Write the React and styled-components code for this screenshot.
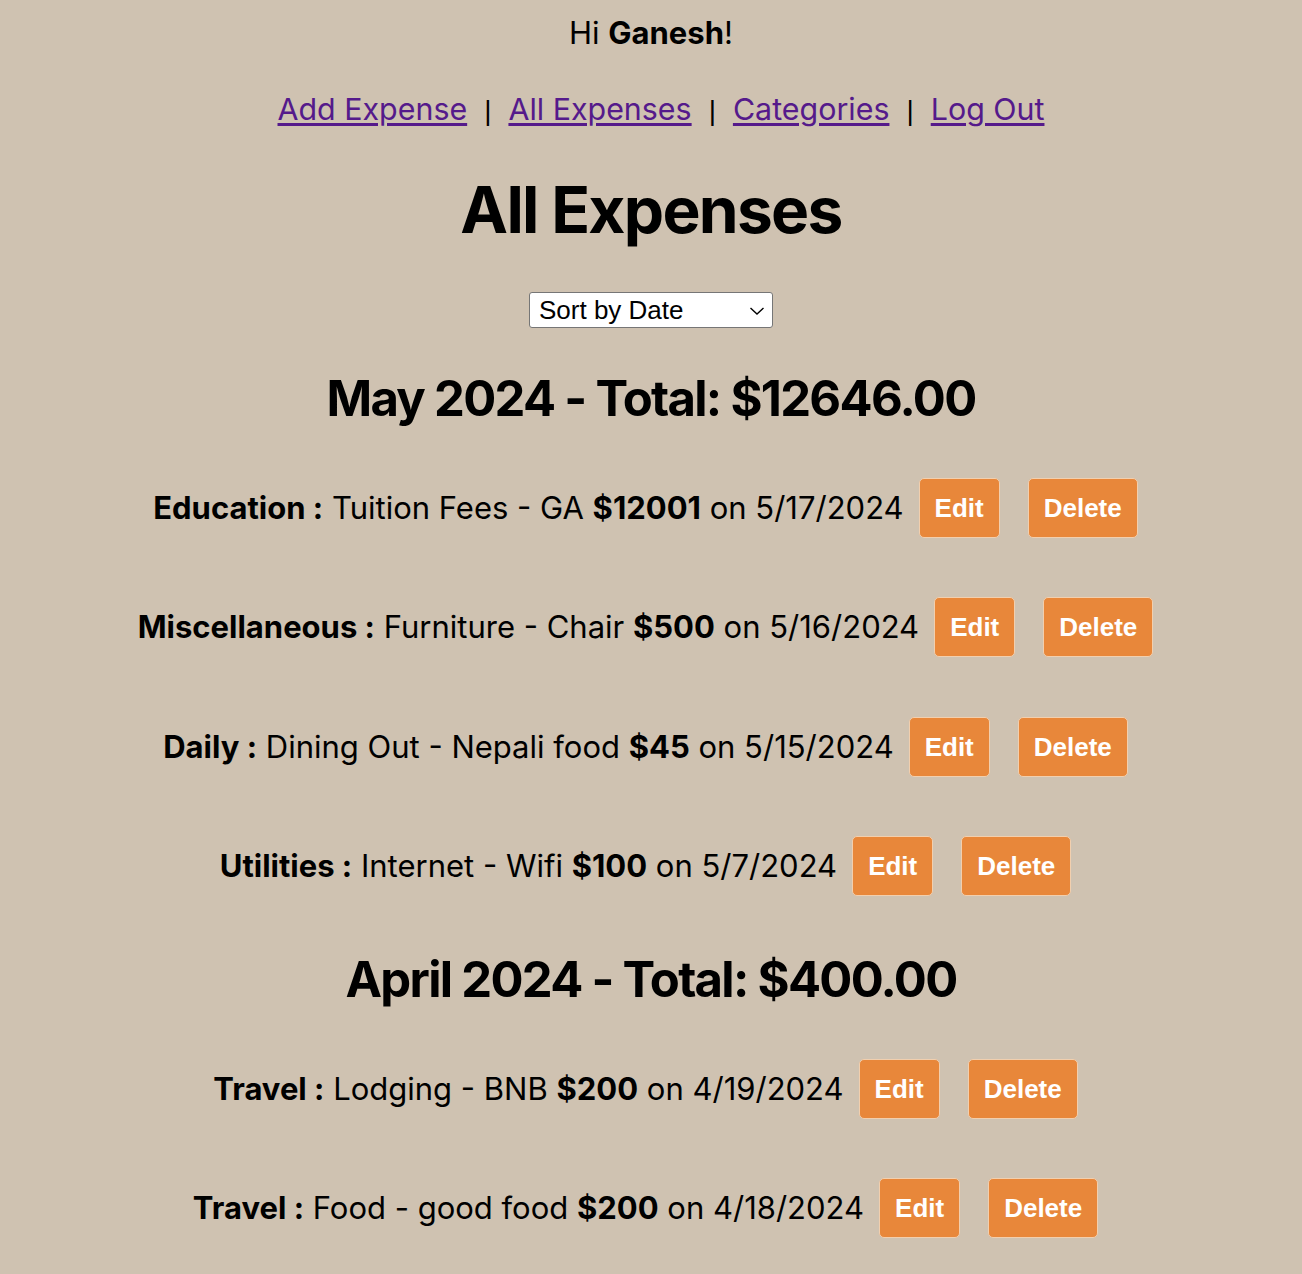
import React from "react";
import styled, { createGlobalStyle } from "styled-components";

const months = [
  {
    label: "May 2024",
    total: "$12646.00",
    items: [
      { category: "Education", name: "Tuition Fees - GA", amount: "$12001", date: "5/17/2024" },
      { category: "Miscellaneous", name: "Furniture - Chair", amount: "$500", date: "5/16/2024" },
      { category: "Daily", name: "Dining Out - Nepali food", amount: "$45", date: "5/15/2024" },
      { category: "Utilities", name: "Internet - Wifi", amount: "$100", date: "5/7/2024" },
    ],
  },
  {
    label: "April 2024",
    total: "$400.00",
    items: [
      { category: "Travel", name: "Lodging - BNB", amount: "$200", date: "4/19/2024" },
      { category: "Travel", name: "Food - good food", amount: "$200", date: "4/18/2024" },
    ],
  },
];

const links = ["Add Expense", "All Expenses", "Categories", "Log Out"];

const GlobalStyle = createGlobalStyle`
  body {
    margin: 0;
    background: #cfc2b1;
    font-family: Inter, "Liberation Sans", sans-serif;
    color: #000;
  }
`;

const App = () => {
  return (
    <Page>
      <GlobalStyle />
      <Greeting>
        Hi <b>Ganesh</b>!
      </Greeting>
      <Nav>
        {links.map((link, i) => (
          <React.Fragment key={link}>
            {i > 0 && <Sep>|</Sep>}
            <NavLink href="#">{link}</NavLink>
          </React.Fragment>
        ))}
      </Nav>
      <Title>All Expenses</Title>
      <SelectWrap>
        <SortSelect defaultValue="date">
          <option value="date">Sort by Date</option>
          <option value="amount">Sort by Amount</option>
          <option value="category">Sort by Category</option>
        </SortSelect>
        <Chevron viewBox="0 0 16 10" aria-hidden="true">
          <path d="M1.5 2 L8 8 L14.5 2" fill="none" stroke="#000" strokeWidth="1.4" />
        </Chevron>
      </SelectWrap>
      {months.map((month, mi) => (
        <MonthSection key={month.label} $first={mi === 0}>
          <MonthTitle>
            {month.label} - Total: {month.total}
          </MonthTitle>
          <List>
            {month.items.map((item) => (
              <Row key={item.name}>
                <RowText>
                  <b>{item.category} :</b> {item.name} <b>{item.amount}</b> on {item.date}
                </RowText>
                <ActionButton>Edit</ActionButton>
                <ActionButton>Delete</ActionButton>
              </Row>
            ))}
          </List>
        </MonthSection>
      ))}
    </Page>
  );
};

const Page = styled.div`
  display: flex;
  flex-direction: column;
  align-items: center;
  padding-top: 15px;
  padding-bottom: 40px;
`;

const Greeting = styled.p`
  margin: 0;
  font-size: 31px;
  line-height: 36px;
`;

const Nav = styled.nav`
  margin-top: 40px;
  padding-left: 20px;
  font-size: 30.4px;
  line-height: 36px;
`;

const NavLink = styled.a`
  color: #551a8b;
  text-decoration: underline;
  text-underline-offset: 3px;
`;

const Sep = styled.span`
  margin: 0 17px;
  font-size: 28px;
  font-family: "Liberation Sans", Arial, sans-serif;
`;

const Title = styled.h1`
  margin: 42px 0 0;
  font-size: 64px;
  line-height: 78px;
  font-weight: 700;
  letter-spacing: -1.7px;
`;

const SelectWrap = styled.div`
  position: relative;
  margin-top: 43px;
  display: flex;
`;

const SortSelect = styled.select`
  appearance: none;
  width: 244px;
  height: 36px;
  font-family: "Liberation Sans", Arial, sans-serif;
  font-size: 26px;
  padding: 0 9px;
  border: 1px solid #767676;
  border-radius: 3px;
  background: #fff;
  color: #000;
`;

const Chevron = styled.svg`
  position: absolute;
  right: 8px;
  top: 14px;
  width: 16px;
  height: 10px;
  pointer-events: none;
`;

const MonthSection = styled.section`
  display: flex;
  flex-direction: column;
  align-items: center;
  margin-top: ${(p) => (p.$first ? "41px" : "54px")};
`;

const MonthTitle = styled.h2`
  margin: 0;
  font-size: 49px;
  line-height: 60px;
  font-weight: 700;
  letter-spacing: -1.7px;
`;

const List = styled.div`
  display: flex;
  flex-direction: column;
  align-items: center;
  gap: 59.3px;
  margin-top: 49px;
`;

const Row = styled.div`
  display: flex;
  align-items: center;
  gap: 15px;
  padding-right: 11px;
`;

const RowText = styled.span`
  font-size: 31px;
  line-height: 36px;
`;

const ActionButton = styled.button`
  background: #e8873a;
  color: #fff;
  border: 1px solid #f2cfae;
  border-radius: 5px;
  font-family: "Liberation Sans", Arial, sans-serif;
  font-weight: 700;
  font-size: 26px;
  line-height: 30px;
  padding: 14px 15px;
  cursor: pointer;

  & + & {
    margin-left: 13px;
  }
`;

export default App;
